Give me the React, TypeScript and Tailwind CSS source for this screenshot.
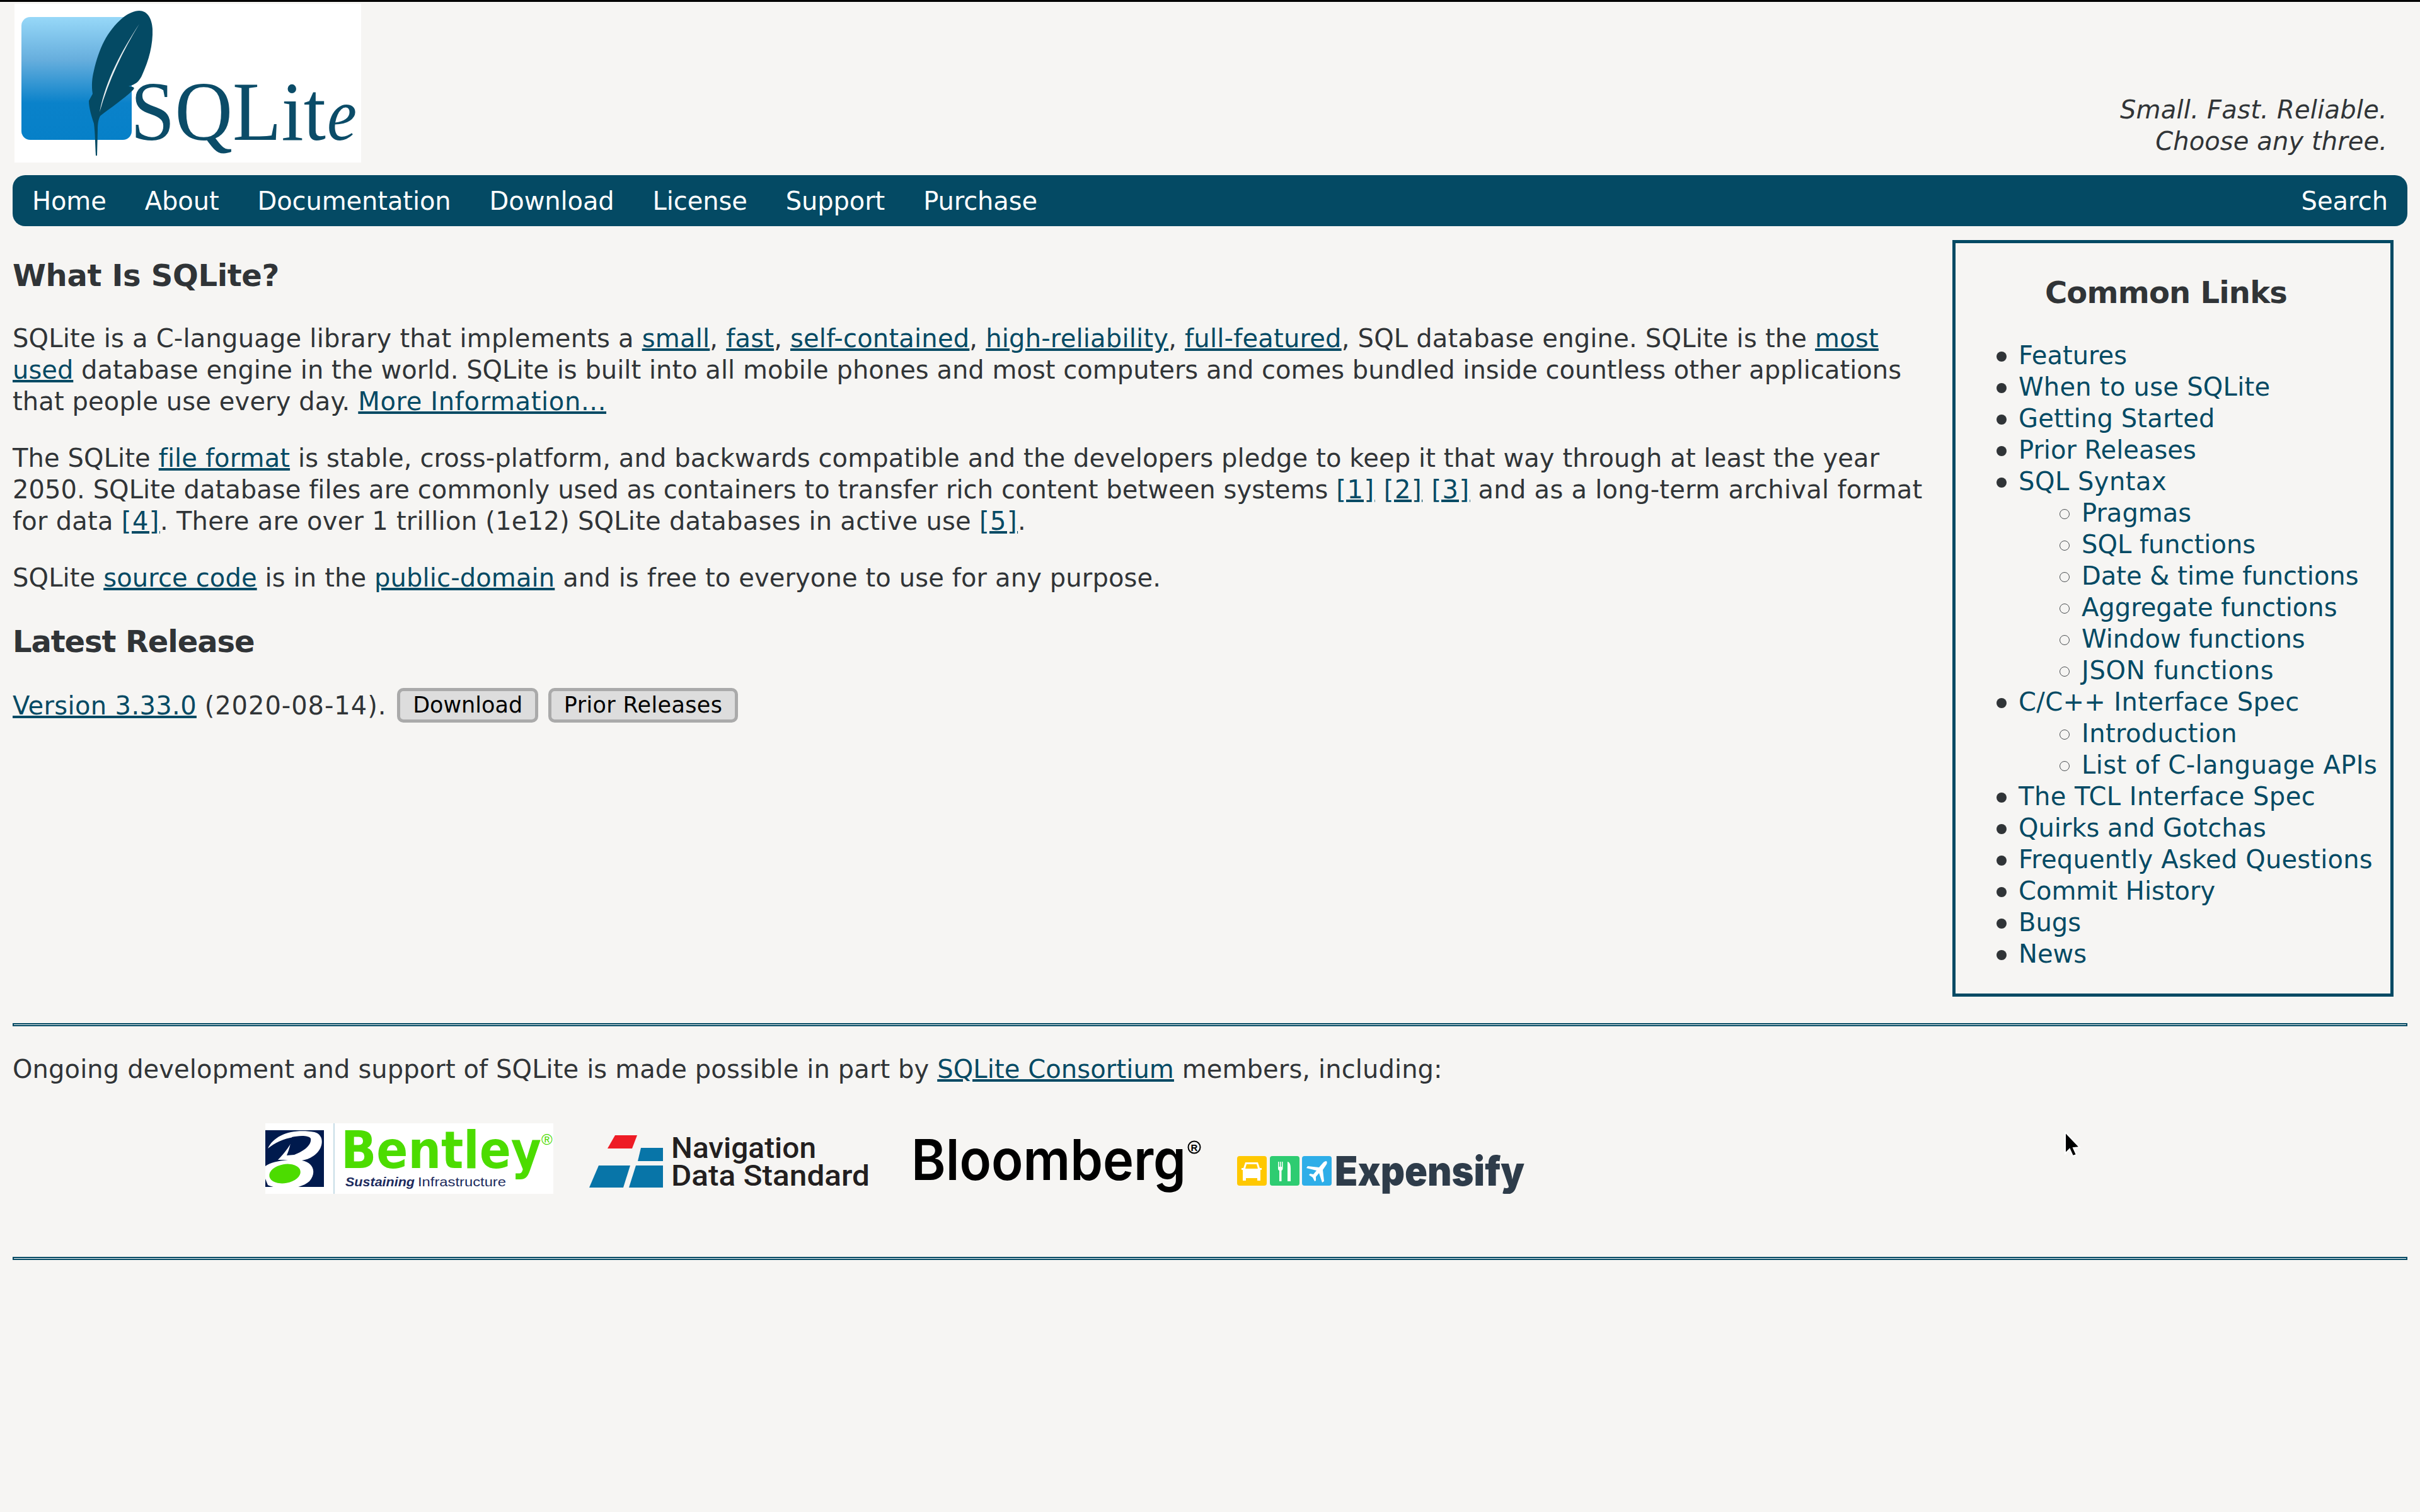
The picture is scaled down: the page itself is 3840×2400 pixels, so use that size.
import React from 'react';

const navLinks = ['Home', 'About', 'Documentation', 'Download', 'License', 'Support', 'Purchase'];

const A = ({ children }: { children: React.ReactNode }) => (
  <a href="#" className="text-[#044a64] underline">{children}</a>
);

const Li = ({ children, className = '' }: { children: React.ReactNode; className?: string }) => (
  <li className="relative before:absolute before:left-[-35px] before:top-[19px] before:h-4 before:w-4 before:rounded-full before:bg-[#303437]">
    <a href="#" className={`text-[#044a64] ${className}`}>{children}</a>
  </li>
);

const Sub = ({ children, className = '' }: { children: React.ReactNode; className?: string }) => (
  <li className="relative before:absolute before:left-[-35px] before:top-[19px] before:h-4 before:w-4 before:rounded-full before:border-[1.5px] before:border-[#4a4e51]">
    <a href="#" className={`text-[#044a64] ${className}`}>{children}</a>
  </li>
);

const SqliteLogo = () => (
  <svg width="550" height="252" viewBox="0 0 550 252" className="block bg-white">
    <defs>
      <linearGradient id="sqliteBlue" x1="0" y1="0" x2="0" y2="1">
        <stop offset="0" stopColor="#97d8f8" />
        <stop offset="0.35" stopColor="#66aedd" />
        <stop offset="0.7" stopColor="#0a82ca" />
        <stop offset="1" stopColor="#0680c8" />
      </linearGradient>
    </defs>
    <rect x="11" y="21" width="175" height="195" rx="14" fill="url(#sqliteBlue)" />
    <path
      d="M198 11 C210 11 218 22 219 40 C220 65 213 90 203 112 C198 124 192 128 181 131 C190 132 192 133 187 138 C172 152 154 164 136 178 C133 184 132 190 132 200 L131 241 L129 241 C128 222 128 205 126 190 C122 178 118 165 118 154 C120 150 122 147 124 143 C122 130 123 118 126 106 C134 72 146 44 172 22 C181 15 190 11 198 11 Z"
      fill="#044a64"
    />
    <path d="M198 32 C170 75 145 120 135 172 C150 120 172 75 198 32 Z" fill="#e8eef0" />
    <text x="184" y="216" textLength="310" lengthAdjust="spacingAndGlyphs" fontSize="134" fill="#0b4c68" className="font-['Liberation_Serif',serif]">SQLit</text>
    <text x="496" y="216" textLength="47" lengthAdjust="spacingAndGlyphs" fontSize="118" fontStyle="italic" fill="#0b4c68" className="font-['Liberation_Serif',serif]">e</text>
  </svg>
);

const BentleyLogo = () => (
  <svg width="457" height="112" viewBox="0 0 457 112" className="block bg-white">
    <rect x="0" y="11" width="93" height="90" fill="#001a4d" />
    <path
      d="M4 40 C14 18 44 8 78 14 C94 18 94 40 76 52 C70 56 64 58 58 59 C76 62 82 78 70 92 C54 106 22 106 4 98 L0 88 L0 68 C8 62 20 60 36 58 L20 58 C32 46 40 34 46 22 C28 24 14 32 4 40 Z"
      fill="#ffffff"
    />
    <path d="M42 22 C50 20 68 18 72 24 C74 34 62 44 46 50 L34 51 C38 42 40 32 42 22 Z" fill="#001a4d" />
    <ellipse cx="31" cy="80" rx="25" ry="15" transform="rotate(-10 31 80)" fill="#4cdc00" />
    <rect x="108" y="0" width="2" height="112" fill="#c6dce6" />
    <text x="120" y="71" textLength="318" lengthAdjust="spacingAndGlyphs" fontSize="82" fontWeight="700" fill="#4cdc00" className="font-['DejaVu_Sans',sans-serif]">Bentley</text>
    <text x="438" y="34" fontSize="24" fill="#4cdc00" className="font-['Liberation_Sans',sans-serif]">®</text>
    <text x="127" y="100" textLength="110" lengthAdjust="spacingAndGlyphs" fontSize="21" fontWeight="700" fontStyle="italic" fill="#1d2b5e" className="font-['Liberation_Sans',sans-serif]">Sustaining</text>
    <text x="242" y="100" textLength="140" lengthAdjust="spacingAndGlyphs" fontSize="21" fill="#1d2b5e" className="font-['Liberation_Sans',sans-serif]">Infrastructure</text>
  </svg>
);

const NdsLogo = () => (
  <svg width="445" height="93" viewBox="0 0 445 93" className="block">
    <polygon points="41,0 76,0 68,21 29,21" fill="#ee1c25" />
    <polygon points="82,20 117,20 117,41 77,41" fill="#0875a8" />
    <polygon points="15,48 65,48 54,83 0,83" fill="#0875a8" />
    <polygon points="74,48 117,48 117,83 63,83" fill="#0875a8" />
    <text x="130" y="36" textLength="230" lengthAdjust="spacingAndGlyphs" fontSize="46" fontWeight="500" fill="#231f20" className="font-['Roboto',sans-serif]">Navigation</text>
    <text x="130" y="80" textLength="315" lengthAdjust="spacingAndGlyphs" fontSize="46" fontWeight="500" fill="#231f20" className="font-['Roboto',sans-serif]">Data Standard</text>
  </svg>
);

const BloombergLogo = () => (
  <svg width="456" height="87" viewBox="0 0 456 87" className="block">
    <text x="-4" y="65" textLength="436" lengthAdjust="spacingAndGlyphs" fontSize="90" fontWeight="600" fill="#000000" className="font-['Inter',sans-serif]">Bloomberg</text>
    <circle cx="445" cy="13" r="9.5" fill="none" stroke="#000" strokeWidth="2" />
    <text x="445" y="18.5" textAnchor="middle" fontSize="15" fontWeight="700" fill="#000000" className="font-['Liberation_Sans',sans-serif]">R</text>
  </svg>
);

const ExpensifyLogo = () => (
  <svg width="456" height="67" viewBox="0 0 456 67" className="block">
    <rect x="0" y="7" width="47" height="47" rx="4" fill="#ffc800" />
    <rect x="52" y="7" width="47" height="47" rx="4" fill="#2ecc71" />
    <rect x="103" y="7" width="47" height="47" rx="4" fill="#2eaee8" />
    {/* car */}
    <path d="M13 17 H33 L36 26 H39 V29 H37 V46 H32 V42 H14 V46 H9 V29 H7 V26 H10 Z M15 20 L13 27 H33 L31 20 Z" fill="#fff" fillRule="evenodd" />
    {/* fork and knife */}
    <path d="M65 16 H66.5 V24 H68 V16 H69.5 V24 H71 V16 H72.5 V27 C72.5 29 71 30 70.5 30 V47 H67 V30 C66 30 65 29 65 27 Z" fill="#fff" />
    <path d="M80 16 C84 17 85 21 85 28 V47 H80 Z" fill="#fff" />
    {/* plane */}
    <path d="M141 15 C143 15 143 18 142 20 L136 29 L138 47 L135 49 L130 34 L125 40 L125 46 L123 47 L120 41 L114 37 L116 35 L121 36 L126 30 L110 26 L112 23 L130 25 L137 17 C138 16 140 15 141 15 Z" fill="#fff" />
    <text x="155" y="54" textLength="301" lengthAdjust="spacingAndGlyphs" fontSize="65" fontWeight="900" fill="#2e3c4a" className="font-['Inter',sans-serif]">Expensify</text>
  </svg>
);

export default function App() {
  return (
    <div className="relative min-h-screen bg-[#f6f5f3] border-t-[3px] border-black px-5 text-[40px] leading-[50px] text-[#303437] font-['DejaVu_Sans',sans-serif]">
      <div className="flex justify-between items-end pt-[3px] pl-[3px] pr-[32px]">
        <SqliteLogo />
        <div className="text-right italic pb-[9px]">
          <div className="tracking-[0.23px]">Small. Fast. Reliable.</div>
          <div className="tracking-[0.1px]">Choose any three.</div>
        </div>
      </div>

      <div className="mt-5 h-[81px] rounded-[20px] bg-[#044a64] flex items-center justify-between px-[31px] text-white">
        <div className="flex gap-[61px] tracking-[-0.1px]">
          {navLinks.map((l) => (
            <a key={l} href="#">{l}</a>
          ))}
        </div>
        <a href="#">Search</a>
      </div>

      <div className="flex items-start gap-[40px] pr-[22px]">
        <div className="flex-1 pt-[48px]">
          <h1 className="text-[48px] leading-[60px] font-bold tracking-[-0.33px]">What Is SQLite?</h1>
          <p className="mt-[45px]">
            <span className="block tracking-[0.21px]">SQLite is a C-language library that implements a <A>small</A>, <A>fast</A>, <A>self-contained</A>, <A>high-reliability</A>, <A>full-featured</A>, SQL database engine. SQLite is the <A>most</A></span>
            <span className="block tracking-[0.025px]"><A>used</A> database engine in the world. SQLite is built into all mobile phones and most computers and comes bundled inside countless other applications</span>
            <span className="block tracking-[0.13px]">that people use every day. <span className="tracking-[0.64px]"><A>More Information...</A></span></span>
          </p>
          <p className="mt-10">
            <span className="block tracking-[0.117px]">The SQLite <A>file format</A> is stable, cross-platform, and backwards compatible and the developers pledge to keep it that way through at least the year</span>
            <span className="block tracking-[0.07px]">2050. SQLite database files are commonly used as containers to transfer rich content between systems <span className="tracking-[1.55px]"><A>[1]</A> <A>[2]</A> <A>[3]</A></span> <span className="tracking-[0.27px]">and as a long-term archival format</span></span>
            <span className="block tracking-[0.25px]">for data <span className="tracking-[1.5px]"><A>[4]</A></span>. There are over 1 trillion (1e12) SQLite databases in active use <span className="tracking-[1.5px]"><A>[5]</A></span>.</span>
          </p>
          <p className="mt-10 tracking-[0.13px]">
            SQLite <A>source code</A> is in the <A>public-domain</A> and is free to everyone to use for any purpose.
          </p>
          <h2 className="mt-[46px] text-[48px] leading-[60px] font-bold tracking-[-1.1px]">Latest Release</h2>
          <p className="mt-[44px]">
            <span className="tracking-[0.35px]"><A>Version 3.33.0</A></span> <span className="tracking-[0.95px]">(2020-08-14).</span>{' '}
            <button className="ml-[4px] mb-[6px] h-[55px] px-5 rounded-[10px] border-[5px] border-[#aaaaaa] bg-[#dddddd] text-[35px] leading-[41px] text-black align-middle">Download</button>{' '}
            <button className="ml-[3px] mb-[6px] h-[55px] px-5 rounded-[10px] border-[5px] border-[#aaaaaa] bg-[#dddddd] text-[35px] leading-[41px] text-black align-middle tracking-[0.35px]">Prior Releases</button>
          </p>
        </div>

        <div className="w-[700px] mt-[22px] border-[5px] border-[#044a64] pt-[48px] pb-[38px]">
          <h3 className="text-[48px] leading-[60px] font-bold text-center pr-[22px] tracking-[-0.8px]">Common Links</h3>
          <ul className="mt-[45px] pl-[100px]">
            <Li>Features</Li>
            <Li className="tracking-[0.27px]">When to use SQLite</Li>
            <Li className="tracking-[0.16px]">Getting Started</Li>
            <Li>Prior Releases</Li>
            <Li className="tracking-[0.5px]">SQL Syntax</Li>
            <ul className="pl-[100px]">
              <Sub>Pragmas</Sub>
              <Sub>SQL functions</Sub>
              <Sub>Date &amp; time functions</Sub>
              <Sub>Aggregate functions</Sub>
              <Sub>Window functions</Sub>
              <Sub className="tracking-[0.7px]">JSON functions</Sub>
            </ul>
            <Li className="tracking-[0.37px]">C/C++ Interface Spec</Li>
            <ul className="pl-[100px]">
              <Sub className="tracking-[0.4px]">Introduction</Sub>
              <Sub className="tracking-[0.43px]">List of C-language APIs</Sub>
            </ul>
            <Li className="tracking-[0.45px]">The TCL Interface Spec</Li>
            <Li>Quirks and Gotchas</Li>
            <Li className="tracking-[0.2px]">Frequently Asked Questions</Li>
            <Li>Commit History</Li>
            <Li>Bugs</Li>
            <Li>News</Li>
          </ul>
        </div>
      </div>

      <hr className="mt-[42px] h-[5px] border-2 border-[#044a64] bg-[#f6f5f3]" />
      <p className="mt-[43px] tracking-[0.107px]">
        Ongoing development and support of SQLite is made possible in part by <A>SQLite Consortium</A> members, including:
      </p>
      <div className="mt-[61px] flex items-end gap-[57px] pl-[401px]">
        <BentleyLogo />
        <NdsLogo />
        <div className="ml-[13px]"><BloombergLogo /></div>
        <ExpensifyLogo />
      </div>
      <hr className="mt-[100px] h-[5px] border-2 border-[#044a64] bg-[#f6f5f3]" />

      <svg width="26" height="40" viewBox="0 0 26 40" className="absolute left-[3275px] top-[1793px]">
        <path d="M2 1 L25 25 L15 26 L20 37 L14 39 L9 28 L2 35 Z" fill="#000" stroke="#fff" strokeWidth="2" />
      </svg>
    </div>
  );
}
